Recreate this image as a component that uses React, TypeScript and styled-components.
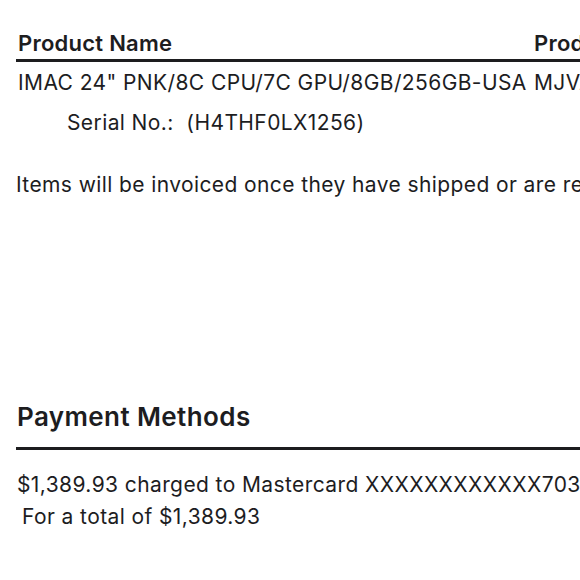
import React from 'react';
import styled, { createGlobalStyle } from 'styled-components';

const GlobalStyle = createGlobalStyle`
  html, body {
    margin: 0;
    padding: 0;
    background: #ffffff;
  }
  body {
    font-family: Inter, "Noto Sans", sans-serif;
    color: #1d1d1f;
    overflow: hidden;
  }
`;

const Page = styled.div`
  width: 580px;
  height: 580px;
  overflow: hidden;
  padding-left: 16px;
  box-sizing: border-box;
`;

const Sheet = styled.div`
  width: 760px;
`;

const ItemsTable = styled.div`
  padding-top: 30px;
`;

const HeaderRow = styled.div`
  display: flex;
  border-bottom: 3px solid #1d1d1f;
  padding-bottom: 3px;
`;

const HeaderCell = styled.div<{ $w?: number }>`
  width: ${({ $w }) => ($w ? `${$w}px` : 'auto')};
  flex-shrink: 0;
  font-size: 22px;
  line-height: 26px;
  font-weight: 600;
  letter-spacing: 0.25px;
  padding-left: 2px;
  white-space: nowrap;
`;

const ItemRow = styled.div`
  display: flex;
  padding-top: 7px;
`;

const Cell = styled.div<{ $w?: number }>`
  width: ${({ $w }) => ($w ? `${$w}px` : 'auto')};
  flex-shrink: 0;
  font-size: 21px;
  line-height: 28px;
  letter-spacing: 0.4px;
  padding-left: 2px;
  white-space: nowrap;
`;

const Serial = styled.div`
  font-size: 21px;
  line-height: 28px;
  letter-spacing: 0.4px;
  padding-left: 51px;
  margin-top: 12px;
  white-space: nowrap;
`;

const Note = styled.p`
  margin: 34px 0 0;
  font-size: 21px;
  line-height: 28px;
  letter-spacing: 0.4px;
  white-space: nowrap;
`;

const Section = styled.section`
  margin-top: 202px;
`;

const SectionTitle = styled.h2`
  margin: 0;
  font-size: 26px;
  line-height: 32px;
  font-weight: 600;
  letter-spacing: 0.4px;
  padding-left: 1px;
  padding-bottom: 14px;
  border-bottom: 3px solid #1d1d1f;
`;

const Lines = styled.div`
  padding-top: 19px;
`;

const Line = styled.div<{ $indent?: number }>`
  font-size: 21px;
  line-height: 32px;
  letter-spacing: 0.4px;
  white-space: nowrap;
  padding-left: ${({ $indent }) => $indent ?? 1}px;
`;

export default function App() {
  return (
    <>
      <GlobalStyle />
      <Page>
        <Sheet>
          <ItemsTable>
            <HeaderRow>
              <HeaderCell $w={514}>Product Name</HeaderCell>
              <HeaderCell>Product Number</HeaderCell>
            </HeaderRow>
            <ItemRow>
              <Cell $w={514}>IMAC 24" PNK/8C CPU/7C GPU/8GB/256GB-USA</Cell>
              <Cell>MJVA3LL/A</Cell>
            </ItemRow>
            <Serial>Serial No.:&nbsp; (H4THF0LX1256)</Serial>
          </ItemsTable>
          <Note>Items will be invoiced once they have shipped or are ready for pickup.</Note>
          <Section>
            <SectionTitle>Payment Methods</SectionTitle>
            <Lines>
              <Line>$1,389.93 charged to Mastercard XXXXXXXXXXXX7035</Line>
              <Line $indent={6}>For a total of $1,389.93</Line>
            </Lines>
          </Section>
        </Sheet>
      </Page>
    </>
  );
}
